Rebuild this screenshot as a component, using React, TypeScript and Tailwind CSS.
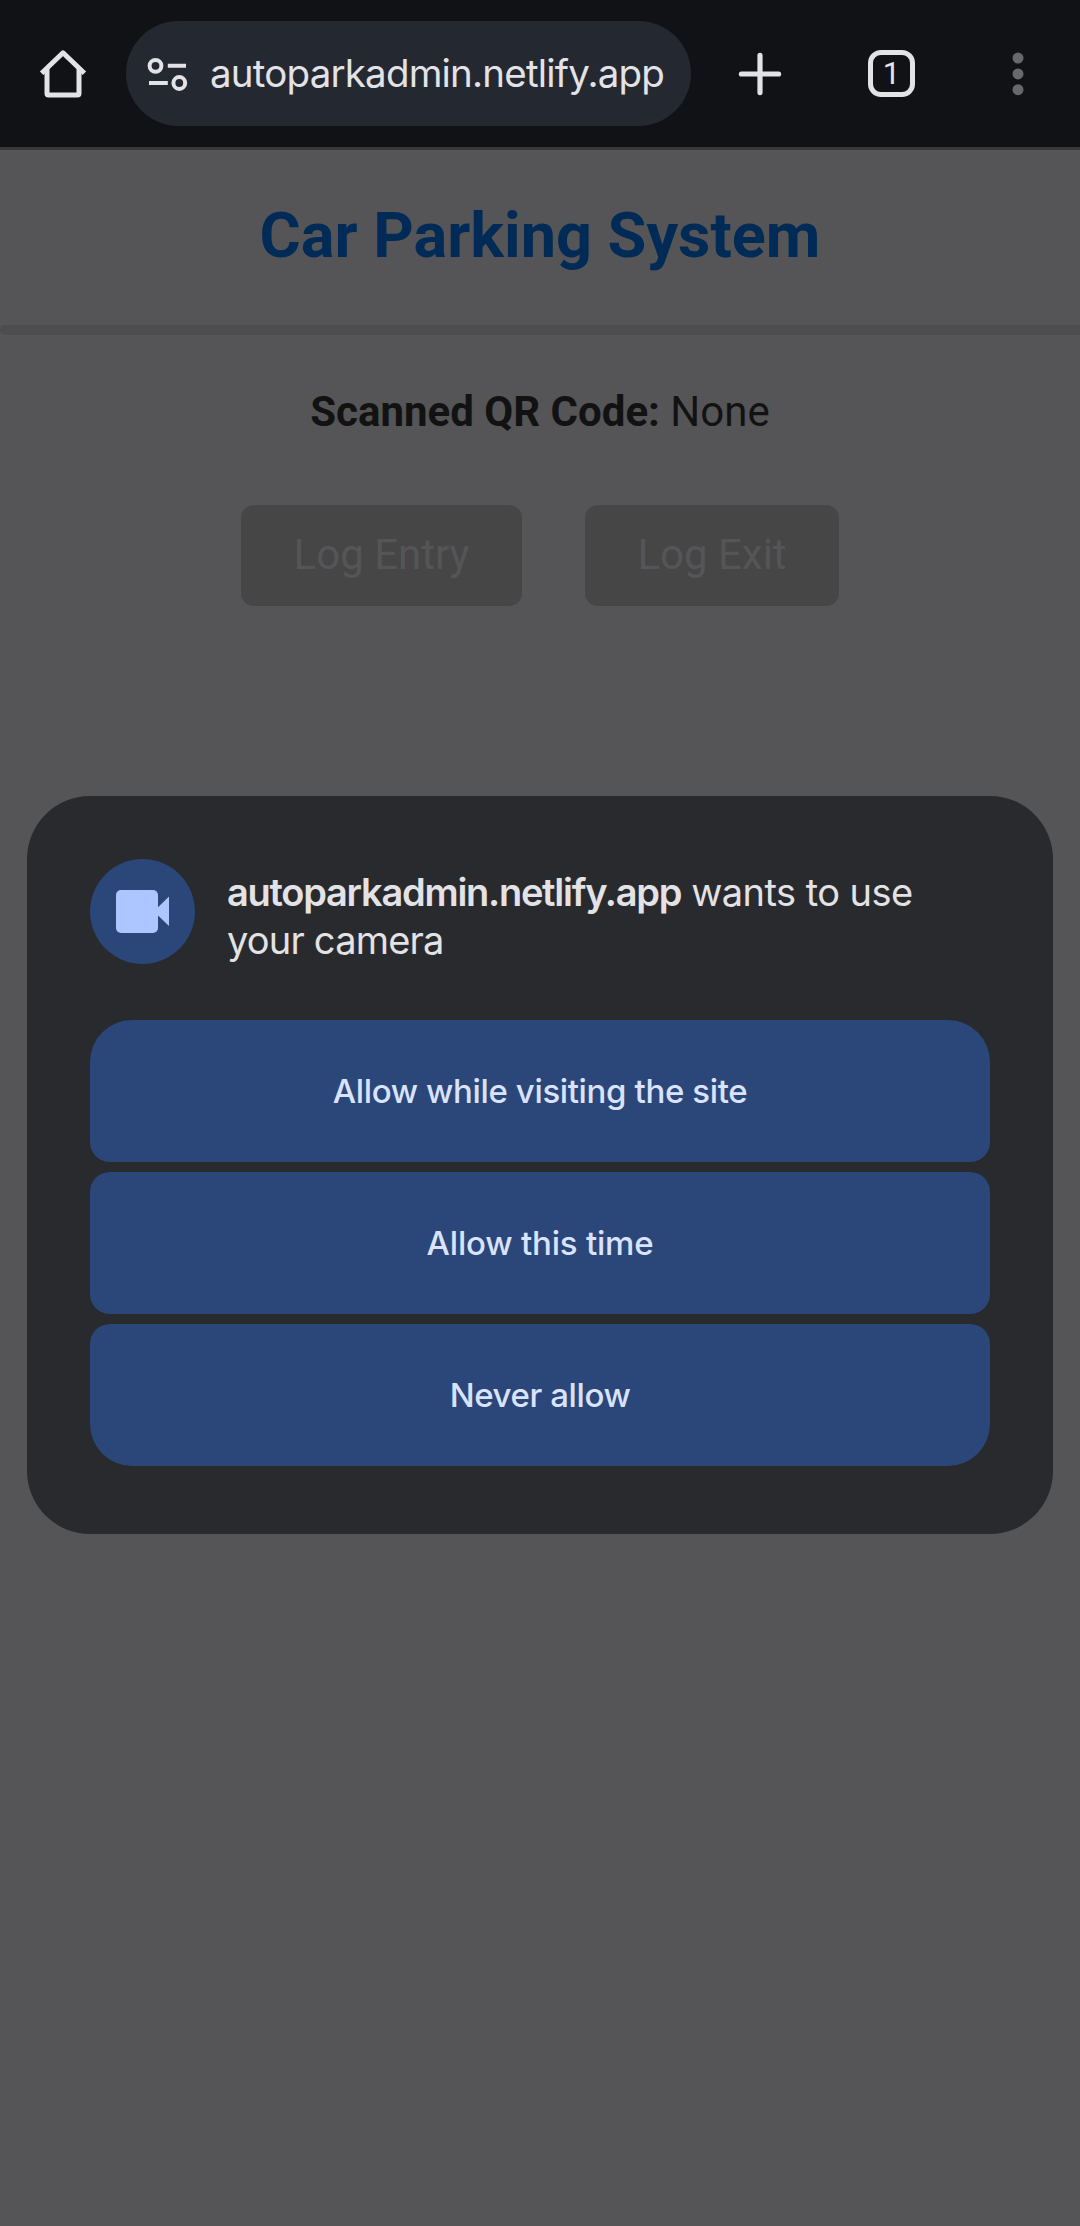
function HomeIcon() {
  return (
    <svg width="50" height="50" viewBox="0 0 50 50" fill="none" stroke="#e3e2e6" strokeWidth="5">
      <path d="M3.6 24.2 25 3.8 46.4 24.2" strokeLinejoin="round" />
      <path d="M9 19.5V44.6Q9 46 10.4 46H39.6Q41 46 41 44.6V19.5" />
    </svg>
  );
}

function TuneIcon() {
  return (
    <svg width="42" height="36" viewBox="0 0 42 36" fill="none" stroke="#e3e2e6" strokeWidth="4">
      <circle cx="9.5" cy="9.8" r="5.9" />
      <path d="M21.8 9.8H40M3 27H21.8" />
      <circle cx="33.3" cy="27" r="5.9" />
    </svg>
  );
}

function PlusIcon() {
  return (
    <svg width="44" height="44" viewBox="0 0 44 44" stroke="#e3e2e6" strokeWidth="5.2" strokeLinecap="round">
      <path d="M22 3.4V40.6M3.4 22H40.6" />
    </svg>
  );
}

function MoreIcon() {
  return (
    <svg width="12" height="44" viewBox="0 0 12 44" fill="#68686b">
      <circle cx="6" cy="6.1" r="5.5" />
      <circle cx="6" cy="21.9" r="5.5" />
      <circle cx="6" cy="37.7" r="5.5" />
    </svg>
  );
}

function CameraIcon() {
  return (
    <svg width="53" height="43" viewBox="0 0 53 43" fill="#adc6ff">
      <rect width="42" height="43" rx="5" />
      <path d="M42 17.2 53 6.5V36L42 25.5Z" />
    </svg>
  );
}

function BrowserBar() {
  return (
    <header className="flex h-[150px] items-center border-b-[3px] border-[#38383a] bg-[#111216]">
      <div className="flex w-[126px] justify-center">
        <HomeIcon />
      </div>
      <div className="flex h-[105px] w-[565px] items-center rounded-full bg-[#242830] pl-5">
        <TuneIcon />
        <span className="ml-[22px] whitespace-nowrap font-['Inter',sans-serif] text-[38.5px] tracking-[-0.8px] text-[#e3e2e6]">
          autoparkadmin.netlify.app
        </span>
      </div>
      <div className="flex w-[137px] justify-center">
        <PlusIcon />
      </div>
      <div className="flex w-[127px] justify-center">
        <div className="flex size-[47px] items-center justify-center rounded-[13px] border-[5px] border-[#e3e2e6] font-['Roboto',sans-serif] text-[31px] leading-none text-[#e3e2e6]">
          1
        </div>
      </div>
      <div className="flex w-[125px] justify-center">
        <MoreIcon />
      </div>
    </header>
  );
}

function ParkingPage() {
  return (
    <main className="flex flex-col items-center font-['Roboto',sans-serif]">
      <h1 className="mt-[49px] text-[63px] font-bold leading-[74px] text-[#002b57]">Car Parking System</h1>
      <div className="mt-[52px] h-[10px] w-full rounded-l-[5px] bg-[#4d4d4d]" />
      <p className="mt-[53px] text-[42px] leading-[48px] text-[#121212]">
        <strong className="font-bold">Scanned QR Code:</strong> None
      </p>
      <div className="mt-[69px] flex gap-[63px] text-[42px] text-[#555557]">
        <button className="h-[101px] w-[281px] rounded-[13px] bg-[#464646] pb-[2px]">Log Entry</button>
        <button className="h-[101px] w-[254px] rounded-[13px] bg-[#464646] pb-[2px]">Log Exit</button>
      </div>
    </main>
  );
}

function PermissionDialog() {
  return (
    <div
      role="dialog"
      className="absolute inset-x-[27px] top-[796px] h-[738px] rounded-[63px] bg-[#282a2d] p-[63px] font-['Inter',sans-serif]"
    >
      <div className="flex h-[105px]">
        <div className="flex size-[105px] shrink-0 items-center justify-center rounded-full bg-[#2b4678]">
          <CameraIcon />
        </div>
        <p className="ml-[32px] mt-[9px] whitespace-nowrap text-[38px] leading-[48px] tracking-[-0.55px] text-[#e3e2e6]">
          <strong className="font-semibold tracking-[-1.26px]">autoparkadmin.netlify.app</strong> wants to use
          <br />
          <span className="tracking-[-0.8px]">your camera</span>
        </p>
      </div>
      <div className="mt-14 flex flex-col gap-[10px] text-[33px] font-medium text-[#d9e2ff]">
        <button className="h-[142px] rounded-b-[20px] rounded-t-[42px] bg-[#2b4678] pt-[2px] tracking-[-0.37px]">
          Allow while visiting the site
        </button>
        <button className="h-[142px] rounded-[20px] bg-[#2b4678] pt-[2px] tracking-[-0.2px]">Allow this time</button>
        <button className="h-[142px] rounded-b-[42px] rounded-t-[20px] bg-[#2b4678] pt-[2px] tracking-[-0.4px]">
          Never allow
        </button>
      </div>
    </div>
  );
}

export default function App() {
  return (
    <div className="relative h-[2226px] w-full overflow-hidden bg-[#555557]">
      <BrowserBar />
      <ParkingPage />
      <PermissionDialog />
    </div>
  );
}
